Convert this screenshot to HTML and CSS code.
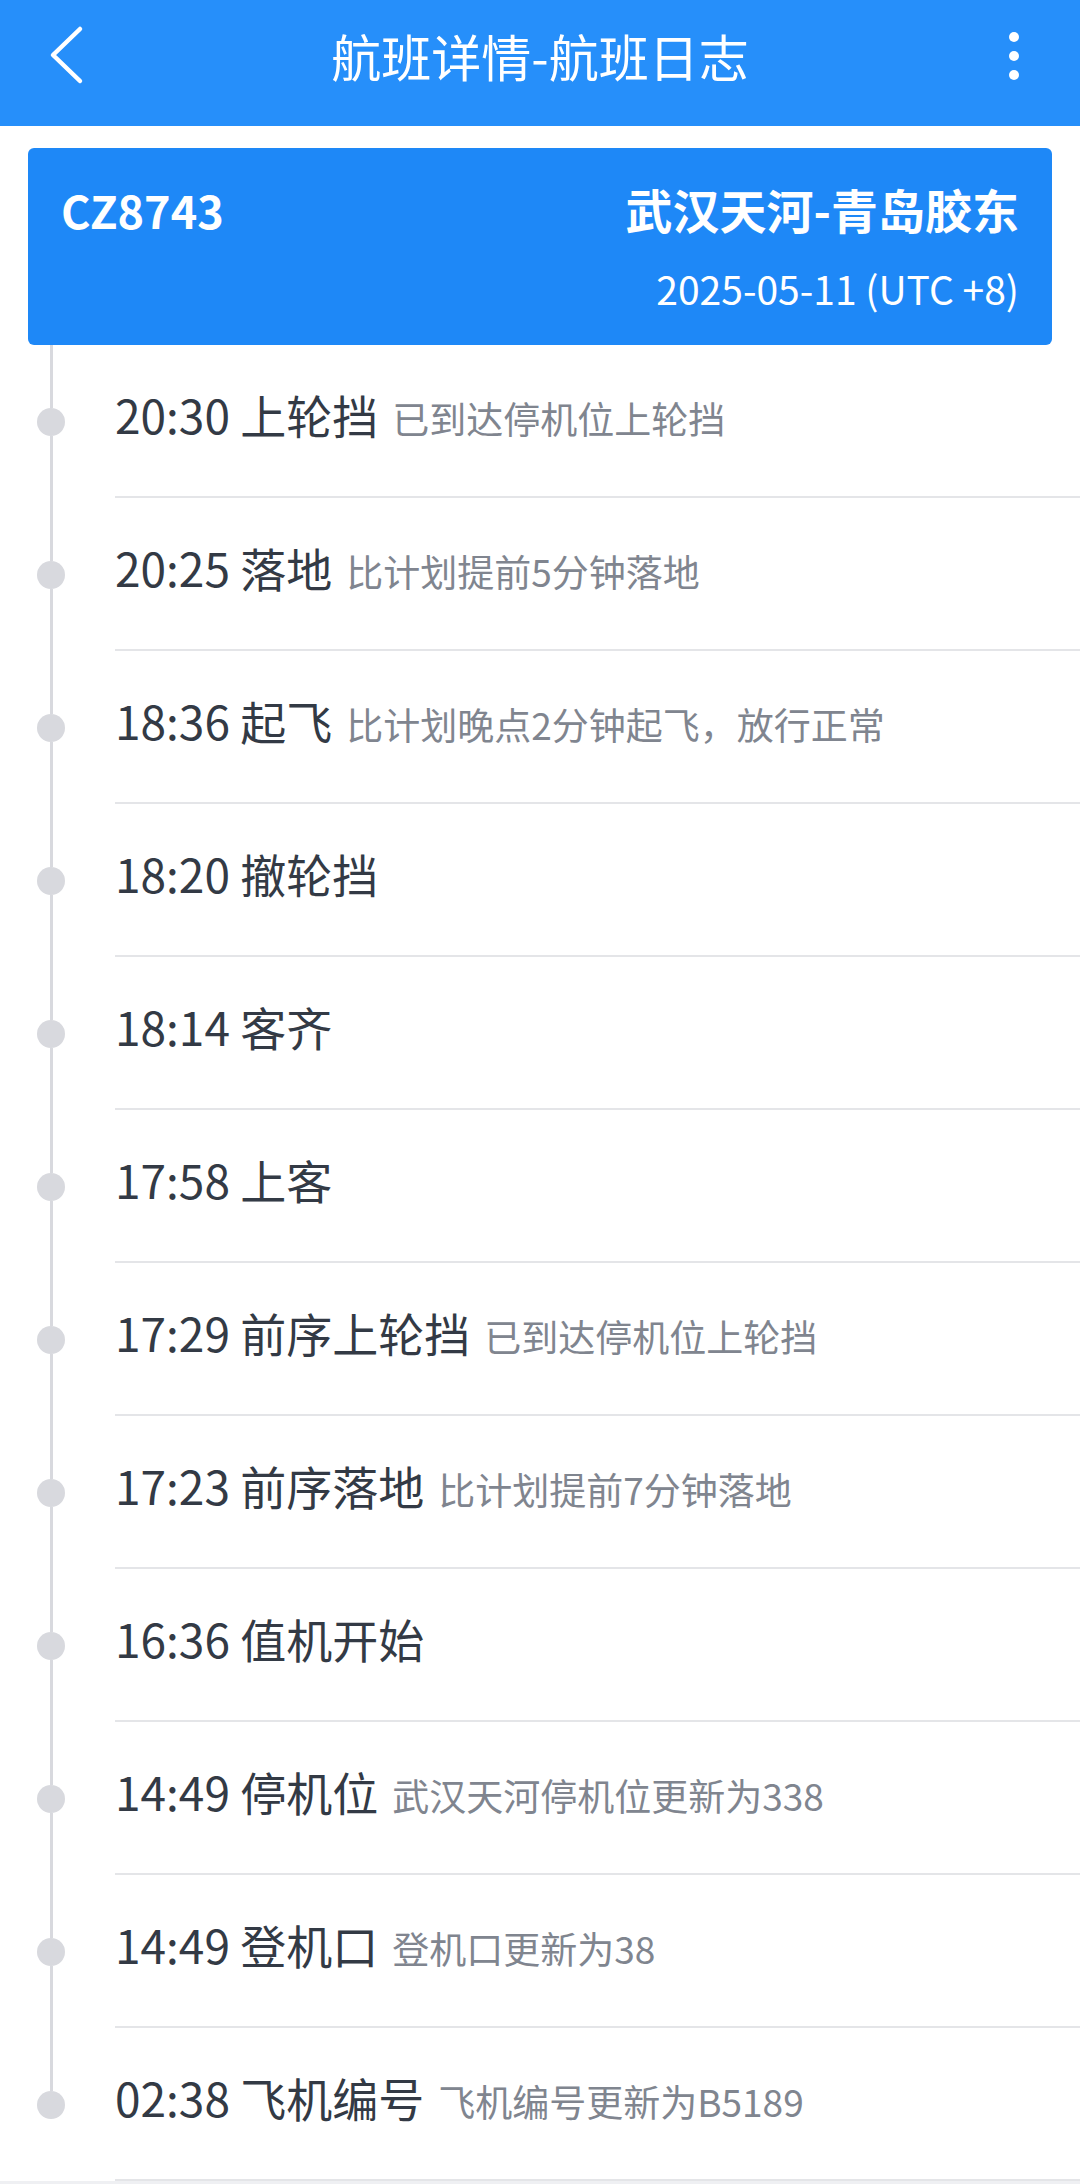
FILE: index.html
```html
<!DOCTYPE html>
<html lang="zh-CN">
<head>
    <meta charset="utf-8">
    <meta name="viewport" content="width=device-width, initial-scale=1.0">
    <title>航班详情-航班日志</title>
    <link rel="stylesheet" href="styles.css">
</head>
<body>

    <div class="header">
        <a class="back">
            <svg width="130" height="110" viewBox="0 0 130 110">
                <path d="M80 29 L53 55 L80 81" fill="none" stroke="#fff" stroke-width="4.5" stroke-linecap="round" stroke-linejoin="round"/>
            </svg>
        </a>
        <div class="title">航班详情-航班日志</div>
        <a class="more">
            <svg width="130" height="110" viewBox="0 0 130 110">
                <circle cx="64" cy="37" r="5" fill="#fff"/>
                <circle cx="64" cy="56" r="5" fill="#fff"/>
                <circle cx="64" cy="75" r="5" fill="#fff"/>
            </svg>
        </a>
    </div>

    <div class="page">
        <div class="flight-card">
            <div class="flight-top">
                <span class="flight-no">CZ8743</span>
                <span class="route">武汉天河-青岛胶东</span>
            </div>
            <div class="flight-date">2025-05-11 (UTC +8)</div>
        </div>

        <div class="log">
            <div class="log-item first">
                <div class="rail"><span class="seg"></span><span class="dot"></span><span class="seg"></span></div>
                <div class="log-body"><span class="main">20:30 上轮挡</span><span class="note">已到达停机位上轮挡</span></div>
            </div>
            <div class="log-item">
                <div class="rail"><span class="seg"></span><span class="dot"></span><span class="seg"></span></div>
                <div class="log-body"><span class="main">20:25 落地</span><span class="note">比计划提前5分钟落地</span></div>
            </div>
            <div class="log-item">
                <div class="rail"><span class="seg"></span><span class="dot"></span><span class="seg"></span></div>
                <div class="log-body"><span class="main">18:36 起飞</span><span class="note">比计划晚点2分钟起飞，放行正常</span></div>
            </div>
            <div class="log-item">
                <div class="rail"><span class="seg"></span><span class="dot"></span><span class="seg"></span></div>
                <div class="log-body"><span class="main">18:20 撤轮挡</span></div>
            </div>
            <div class="log-item">
                <div class="rail"><span class="seg"></span><span class="dot"></span><span class="seg"></span></div>
                <div class="log-body"><span class="main">18:14 客齐</span></div>
            </div>
            <div class="log-item">
                <div class="rail"><span class="seg"></span><span class="dot"></span><span class="seg"></span></div>
                <div class="log-body"><span class="main">17:58 上客</span></div>
            </div>
            <div class="log-item">
                <div class="rail"><span class="seg"></span><span class="dot"></span><span class="seg"></span></div>
                <div class="log-body"><span class="main">17:29 前序上轮挡</span><span class="note">已到达停机位上轮挡</span></div>
            </div>
            <div class="log-item">
                <div class="rail"><span class="seg"></span><span class="dot"></span><span class="seg"></span></div>
                <div class="log-body"><span class="main">17:23 前序落地</span><span class="note">比计划提前7分钟落地</span></div>
            </div>
            <div class="log-item">
                <div class="rail"><span class="seg"></span><span class="dot"></span><span class="seg"></span></div>
                <div class="log-body"><span class="main">16:36 值机开始</span></div>
            </div>
            <div class="log-item">
                <div class="rail"><span class="seg"></span><span class="dot"></span><span class="seg"></span></div>
                <div class="log-body"><span class="main">14:49 停机位</span><span class="note">武汉天河停机位更新为338</span></div>
            </div>
            <div class="log-item">
                <div class="rail"><span class="seg"></span><span class="dot"></span><span class="seg"></span></div>
                <div class="log-body"><span class="main">14:49 登机口</span><span class="note">登机口更新为38</span></div>
            </div>
            <div class="log-item last">
                <div class="rail"><span class="seg"></span><span class="dot"></span><span class="seg"></span></div>
                <div class="log-body"><span class="main">02:38 飞机编号</span><span class="note">飞机编号更新为B5189</span></div>
            </div>
        </div>
    </div>

</body>
</html>
```

FILE: styles.css
```css
* {
    margin: 0;
    padding: 0;
    box-sizing: border-box;
}
body {
    background: #eff0f3;
    font-family: "Noto Sans CJK SC", "Noto Sans", sans-serif;
    color: #333a45;
}
.header {
    display: flex;
    align-items: center;
    height: 126px;
    padding-bottom: 16px;
    background: #268ffa;
    color: white;
}
.back, .more {
    display: block;
    width: 130px;
    height: 110px;
    cursor: pointer;
}
.back svg, .more svg {
    display: block;
}
.title {
    flex: 1;
    text-align: center;
    font-size: 50px;
    line-height: 60px;
}
.page {
    background: white;
    padding-top: 22px;
}
.flight-card {
    margin: 0 28px;
    padding: 31px 33px 32px 33px;
    background: #1e88f7;
    border-radius: 6px;
    color: white;
}
.flight-top {
    display: flex;
    justify-content: space-between;
    align-items: baseline;
    line-height: 60px;
    font-weight: bold;
}
.flight-no {
    font-size: 45px;
}
.route {
    font-size: 47px;
}
.flight-date {
    margin-top: 23px;
    text-align: right;
    font-size: 39px;
    line-height: 50px;
}
.log-item {
    display: flex;
    height: 153px;
}
.rail {
    width: 102px;
    display: flex;
    flex-direction: column;
    align-items: center;
    flex-shrink: 0;
}
.seg {
    flex: 1;
    width: 3px;
    background: #d8d9de;
}
.last .seg:last-child {
    background: transparent;
}
.dot {
    width: 28px;
    height: 28px;
    border-radius: 50%;
    background: #d8d9de;
}
.log-body {
    flex: 1;
    margin-left: 13px;
    display: flex;
    align-items: baseline;
    padding-top: 39px;
    border-bottom: 2px solid #e4e5e8;
    white-space: nowrap;
}
.main {
    font-size: 46px;
    line-height: 60px;
}
.note {
    margin-left: 14px;
    font-size: 37px;
    color: #80858f;
}
```
